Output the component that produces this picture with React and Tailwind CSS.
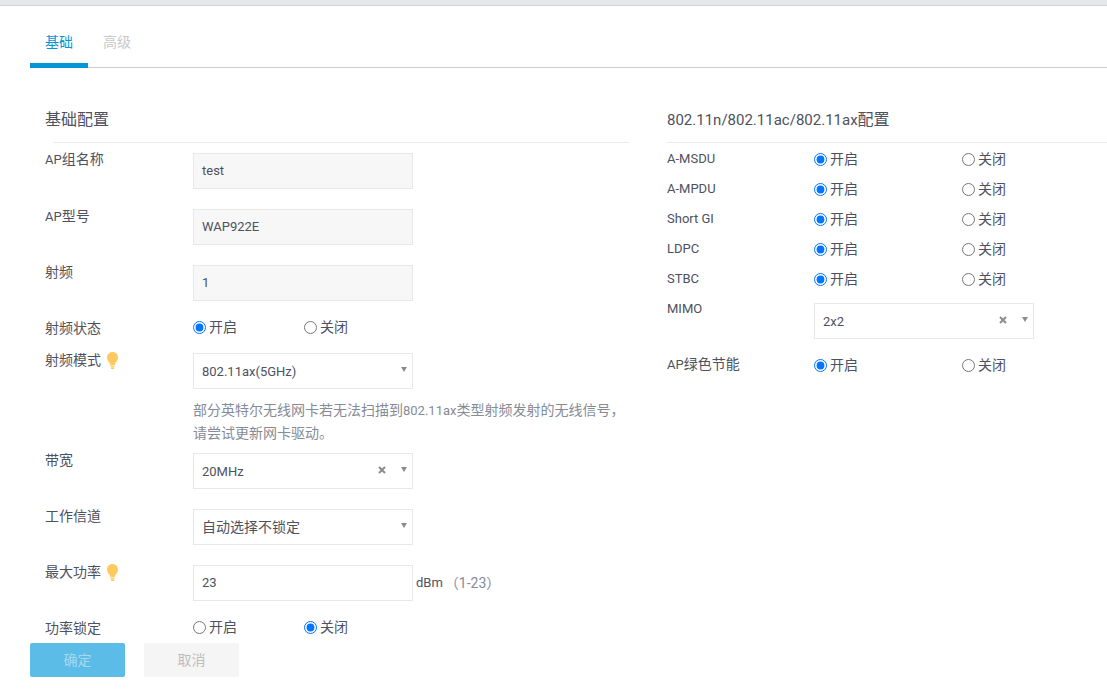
const Bulb = () => (
  <svg width="11" height="17" viewBox="0 0 11 17" className="ml-[6px] shrink-0">
    <path d="M5.5 0C2.4 0 0 2.4 0 5.4c0 2.6 1.7 4 2.6 5.6.4.7.6 1.4.7 2h4.4c.1-.6.3-1.3.7-2 .9-1.6 2.6-3 2.6-5.6C11 2.4 8.6 0 5.5 0z" fill="#ffc95e" />
    <rect x="3.3" y="13.6" width="4.4" height="1.2" fill="#ffc95e" />
    <rect x="3.8" y="15.3" width="3.4" height="1.7" rx="0.7" fill="#ffc95e" />
  </svg>
);

const Latin = ({ children }) => <span className="text-[13px]">{children}</span>;

const Radio = ({ name, checked, label, className }) => (
  <label className={`flex items-center ${className}`}>
    <input type="radio" name={name} defaultChecked={checked} className="m-0 mr-[3px] h-[13px] w-[13px] shrink-0 appearance-auto" />
    <span>{label}</span>
  </label>
);

const RadioPair = ({ name, on = true, wide }) => (
  <div className={`flex h-5 items-center ${wide ? "translate-y-px" : ""}`}>
    <Radio name={name} checked={on} label="开启" className={wide ? "w-[148px]" : "w-[111px]"} />
    <Radio name={name} checked={!on} label="关闭" />
  </div>
);

const Field = ({ value }) => (
  <div className="flex h-9 w-[220px] items-center border border-[#e8e8e8] bg-[#f7f7f7] pl-2 text-[13px]">{value}</div>
);

const Select = ({ value, clearable, latin }) => (
  <div className="flex h-9 w-[220px] items-center border border-[#e8e8e8] bg-white pl-2 pr-[5px]">
    <span className={`flex-1 ${latin ? "pt-[2px] text-[13px]" : ""}`}>{value}</span>
    {clearable && (
      <svg width="8" height="8" viewBox="0 0 8 8" className="mr-[15px] -mt-[3px]">
        <path d="M1 1l6 6M7 1L1 7" stroke="#8c8c8c" strokeWidth="2" />
      </svg>
    )}
    <svg width="6" height="5" viewBox="0 0 6 5" className="-mt-[3px]">
      <path d="M0 0h6L3 5z" fill="#8c8c8c" />
    </svg>
  </div>
);

const Row = ({ label, hint, labelClass = "", width = "w-[148px]", className = "", children }) => (
  <div className={`flex ${className}`}>
    <div className={`flex h-5 shrink-0 items-center ${width} ${labelClass}`}>
      <span>{label}</span>
      {hint && <Bulb />}
    </div>
    <div>{children}</div>
  </div>
);

const RightRow = ({ label, name }) => (
  <Row label={label} width="w-[147px]" className="mb-[10px]">
    <RadioPair name={name} wide />
  </Row>
);

export default function App() {
  return (
    <div className="h-[691px] overflow-hidden bg-white text-sm text-[#4e5160] [font-family:Roboto,'Noto_Sans_CJK_SC',sans-serif]">
      <div className="h-[6px] border-b border-[#d4d4d4] bg-[#e6e7e8]" />

      <div className="ml-[30px] flex h-[62px] border-b border-[#cccccc]">
        <div className="h-[62px] w-[58px] border-b-[5px] border-[#0796d5] pl-[15px] pt-[26px] leading-5 text-[#0796d5]">基础</div>
        <div className="pl-[15px] pt-[26px] leading-5 text-[#c9c9c9]">高级</div>
      </div>

      <div className="flex pt-[39px]">
        <div className="ml-[45px] w-[585px] shrink-0">
          <div className="relative mb-[10px] h-[36px] text-base leading-[26px]">
            基础配置
            <div className="absolute bottom-0 left-[8px] right-0 h-px bg-[#ececec]" />
          </div>

          <Row label={<><Latin>AP</Latin>组名称</>} labelClass="-mt-1" className="mb-5"><Field value="test" /></Row>
          <Row label={<><Latin>AP</Latin>型号</>} labelClass="-mt-[3px]" className="mb-5"><Field value="WAP922E" /></Row>
          <Row label="射频" labelClass="-mt-[3px]" className="mb-4"><Field value="1" /></Row>
          <Row label="射频状态" labelClass="translate-y-px" className="mb-4"><RadioPair name="state" /></Row>
          <Row label="射频模式" hint labelClass="-mt-[3px]" className="mb-2">
            <Select value="802.11ax(5GHz)" latin />
            <p className="mt-[10px] whitespace-nowrap leading-[23px] text-[#868b96]">
              部分英特尔无线网卡若无法扫描到<Latin>802.11ax</Latin>类型射频发射的无线信号，<br />请尝试更新网卡驱动。
            </p>
          </Row>
          <Row label="带宽" labelClass="-mt-[3px]" className="mb-5"><Select value="20MHz" clearable latin /></Row>
          <Row label="工作信道" labelClass="-mt-[3px]" className="mb-5"><Select value="自动选择不锁定" /></Row>
          <Row label="最大功率" hint labelClass="-mt-[3px]" className="mb-4">
            <div className="flex items-center">
              <div className="flex h-9 w-[220px] items-center border border-[#e8e8e8] bg-white pl-2 text-[13px]">23</div>
              <span className="ml-[3px] text-[13px]">dBm</span>
              <span className="ml-[2px] text-[#868b96]">（1-23）</span>
            </div>
          </Row>
          <Row label="功率锁定" labelClass="translate-y-px" className="mb-[6px]"><RadioPair name="lock" on={false} /></Row>
        </div>

        <div className="ml-[37px] flex-1">
          <div className="relative mb-[5px] h-[36px] text-base leading-[26px]">
            <span className="text-[15px]">802.11n/802.11ac/802.11ax</span>配置
            <div className="absolute bottom-0 left-0 right-0 h-px bg-[#ececec]" />
          </div>
          <RightRow label={<Latin>A-MSDU</Latin>} name="msdu" />
          <RightRow label={<Latin>A-MPDU</Latin>} name="mpdu" />
          <RightRow label={<Latin>Short GI</Latin>} name="gi" />
          <RightRow label={<Latin>LDPC</Latin>} name="ldpc" />
          <RightRow label={<Latin>STBC</Latin>} name="stbc" />
          <Row label={<Latin>MIMO</Latin>} width="w-[147px]" className="mb-[15px]"><div className="pt-[5px]"><Select value="2x2" clearable latin /></div></Row>
          <RightRow label={<><Latin>AP</Latin>绿色节能</>} name="green" />
        </div>
      </div>

      <div className="ml-[30px] flex gap-[19px]">
        <button className="h-[34px] w-[95px] rounded-[2px] bg-[#5bbce8] text-[#a5d9f1]">确定</button>
        <button className="h-[34px] w-[95px] rounded-[2px] bg-[#f5f5f5] text-[#bdbdbd]">取消</button>
      </div>
    </div>
  );
}
